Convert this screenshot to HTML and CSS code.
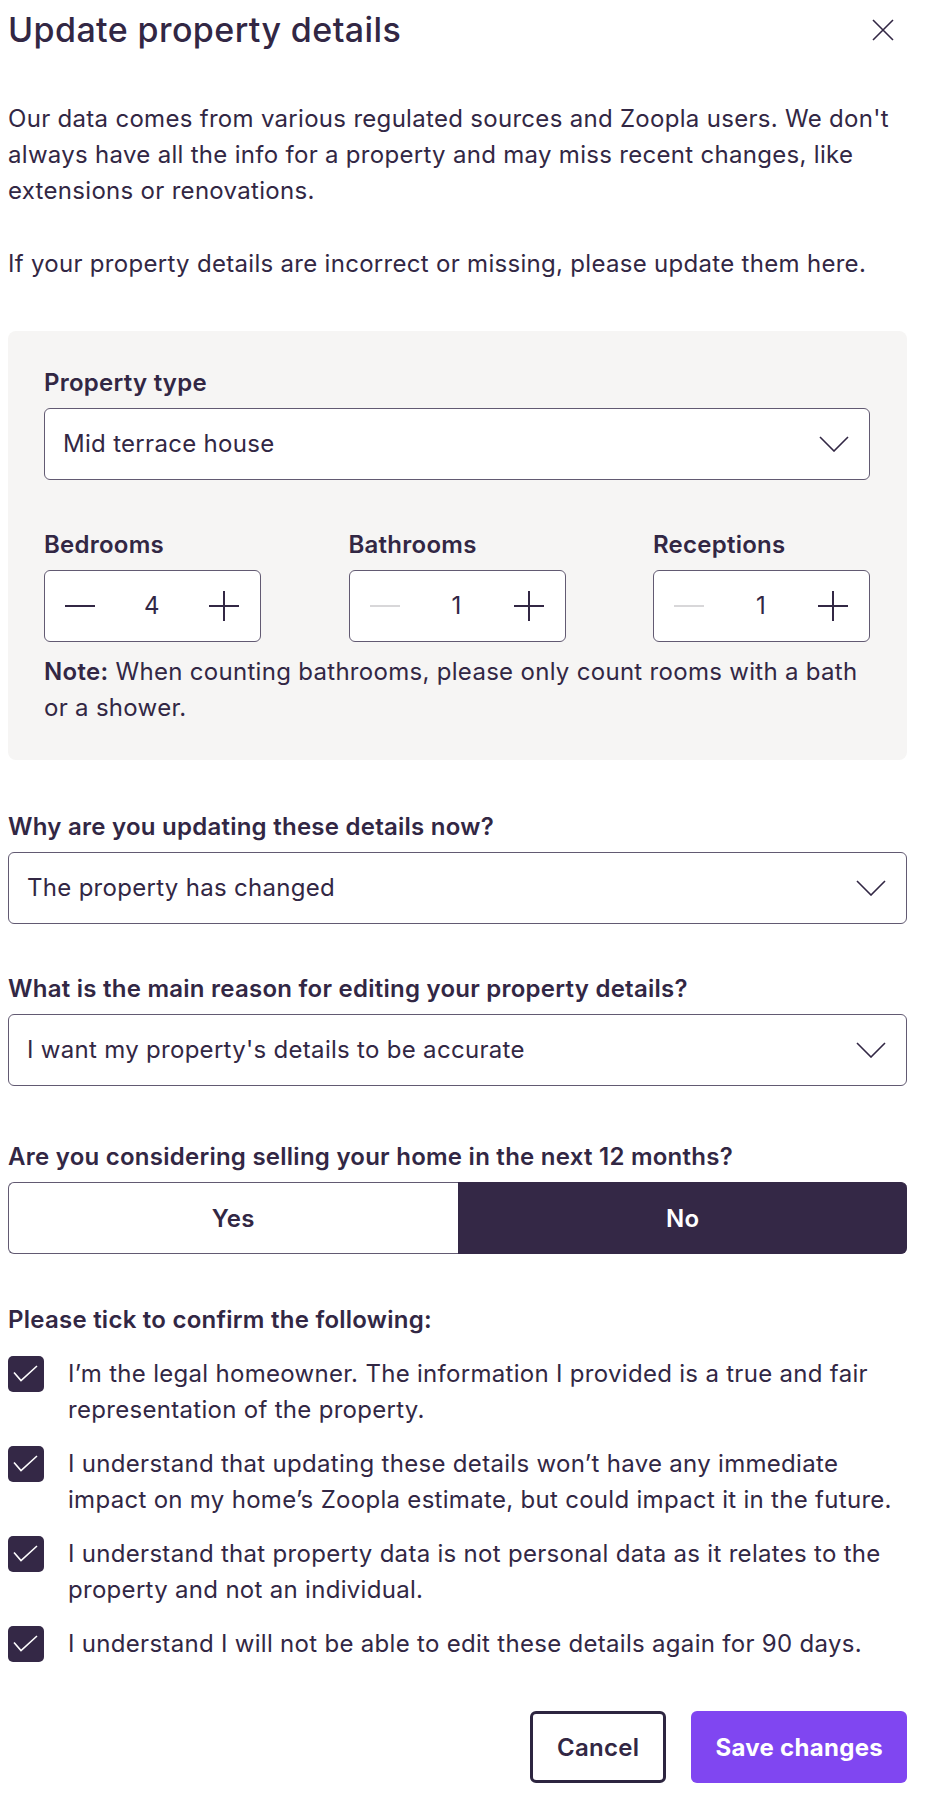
FILE: index.html
```html
<!DOCTYPE html>
<html lang="en">
<head>
<meta charset="utf-8">
<title>Update property details</title>
<link rel="stylesheet" href="styles.css">
</head>
<body>
<div class="dialog">
  <header class="header">
    <h1 class="title">Update property details</h1>
    <button class="close" aria-label="Close">
      <svg width="22" height="22" viewBox="0 0 22 22"><path d="M1 1L21 21M21 1L1 21" stroke="currentColor" stroke-width="1.6" fill="none"/></svg>
    </button>
  </header>

  <p class="intro">Our data comes from various regulated sources and Zoopla users. We don't always have all the info for a property and may miss recent changes, like extensions or renovations.</p>
  <p class="intro intro-second">If your property details are incorrect or missing, please update them here.</p>

  <section class="panel">
    <div class="field">
      <div class="label">Property type</div>
      <div class="select">
        <span>Mid terrace house</span>
        <svg class="chevron" width="30" height="16" viewBox="0 0 30 16"><path d="M1 1L15 15L29 1" stroke="currentColor" stroke-width="1.6" fill="none"/></svg>
      </div>
    </div>

    <div class="counters">
      <div class="field">
        <div class="label">Bedrooms</div>
        <div class="stepper">
          <svg class="step" width="30" height="30" viewBox="0 0 30 30"><path d="M0 15H30" stroke="currentColor" stroke-width="2"/></svg>
          <span class="value">4</span>
          <svg class="step" width="30" height="30" viewBox="0 0 30 30"><path d="M0 15H30M15 0V30" stroke="currentColor" stroke-width="2"/></svg>
        </div>
      </div>
      <div class="field">
        <div class="label">Bathrooms</div>
        <div class="stepper">
          <svg class="step step-disabled" width="30" height="30" viewBox="0 0 30 30"><path d="M0 15H30" stroke="currentColor" stroke-width="2"/></svg>
          <span class="value">1</span>
          <svg class="step" width="30" height="30" viewBox="0 0 30 30"><path d="M0 15H30M15 0V30" stroke="currentColor" stroke-width="2"/></svg>
        </div>
      </div>
      <div class="field">
        <div class="label">Receptions</div>
        <div class="stepper">
          <svg class="step step-disabled" width="30" height="30" viewBox="0 0 30 30"><path d="M0 15H30" stroke="currentColor" stroke-width="2"/></svg>
          <span class="value">1</span>
          <svg class="step" width="30" height="30" viewBox="0 0 30 30"><path d="M0 15H30M15 0V30" stroke="currentColor" stroke-width="2"/></svg>
        </div>
      </div>
    </div>

    <p class="note"><strong>Note:</strong> When counting bathrooms, please only count rooms with a bath or a shower.</p>
  </section>

  <div class="field field-why">
    <div class="label">Why are you updating these details now?</div>
    <div class="select">
      <span>The property has changed</span>
      <svg class="chevron" width="30" height="16" viewBox="0 0 30 16"><path d="M1 1L15 15L29 1" stroke="currentColor" stroke-width="1.6" fill="none"/></svg>
    </div>
  </div>

  <div class="field field-what">
    <div class="label">What is the main reason for editing your property details?</div>
    <div class="select">
      <span>I want my property's details to be accurate</span>
      <svg class="chevron" width="30" height="16" viewBox="0 0 30 16"><path d="M1 1L15 15L29 1" stroke="currentColor" stroke-width="1.6" fill="none"/></svg>
    </div>
  </div>

  <div class="field field-selling">
    <div class="label">Are you considering selling your home in the next 12 months?</div>
    <div class="toggle">
      <button class="option">Yes</button>
      <button class="option option-active">No</button>
    </div>
  </div>

  <div class="confirm">
    <div class="label">Please tick to confirm the following:</div>
    <ul class="checks">
      <li class="check">
        <span class="box"><svg width="36" height="36" viewBox="0 0 36 36"><path d="M6 16.5L13 24.5L29 10" stroke="#fff" stroke-width="1.6" fill="none"/></svg></span>
        <span class="check-text">I’m the legal homeowner. The information I provided is a true and fair representation of the property.</span>
      </li>
      <li class="check">
        <span class="box"><svg width="36" height="36" viewBox="0 0 36 36"><path d="M6 16.5L13 24.5L29 10" stroke="#fff" stroke-width="1.6" fill="none"/></svg></span>
        <span class="check-text">I understand that updating these details won’t have any immediate impact on my home’s Zoopla estimate, but could impact it in the future.</span>
      </li>
      <li class="check">
        <span class="box"><svg width="36" height="36" viewBox="0 0 36 36"><path d="M6 16.5L13 24.5L29 10" stroke="#fff" stroke-width="1.6" fill="none"/></svg></span>
        <span class="check-text">I understand that property data is not personal data as it relates to the property and not an individual.</span>
      </li>
      <li class="check">
        <span class="box"><svg width="36" height="36" viewBox="0 0 36 36"><path d="M6 16.5L13 24.5L29 10" stroke="#fff" stroke-width="1.6" fill="none"/></svg></span>
        <span class="check-text">I understand I will not be able to edit these details again for 90 days.</span>
      </li>
    </ul>
  </div>

  <div class="actions">
    <button class="btn btn-secondary">Cancel</button>
    <button class="btn btn-primary">Save changes</button>
  </div>
</div>
</body>
</html>
```

FILE: styles.css
```css
* { box-sizing: border-box; }

html, body {
  margin: 0;
  padding: 0;
  background: #ffffff;
}

body {
  font-family: Inter, "Noto Sans", "Liberation Sans", sans-serif;
  color: #322744;
  font-size: 24px;
  letter-spacing: 0.3px;
  line-height: 36px;
}

.dialog {
  width: 899px;
  margin-left: 8px;
  padding-bottom: 18px;
}

.header {
  height: 60px;
  display: flex;
  align-items: center;
  justify-content: space-between;
}

.title {
  margin: 0;
  font-size: 34px;
  font-weight: 500;
  line-height: 60px;
  letter-spacing: 0.4px;
}

.close {
  width: 22px;
  height: 22px;
  padding: 0;
  margin-right: 13px;
  border: 0;
  background: none;
  color: #322744;
  display: flex;
}

.intro {
  margin: 41px 0 0;
}

.intro-second {
  margin-top: 37px;
}

.panel {
  margin-top: 49px;
  background: #f6f5f4;
  border-radius: 8px;
  padding: 37px 37px 34px 36px;
}

.field {
  display: flex;
  flex-direction: column;
  gap: 10px;
}

.label {
  font-size: 24px;
  font-weight: 600;
  line-height: 30px;
  letter-spacing: 0.25px;
}

.select {
  height: 72px;
  border: 1px solid #625a72;
  border-radius: 6px;
  background: #ffffff;
  display: flex;
  align-items: center;
  justify-content: space-between;
  padding: 0 20px 0 18px;
}

.chevron {
  color: #322744;
  flex: none;
}

.counters {
  margin-top: 50px;
  display: grid;
  grid-template-columns: repeat(3, 217px);
  justify-content: space-between;
}

.stepper {
  height: 72px;
  border: 1px solid #625a72;
  border-radius: 6px;
  background: #ffffff;
  display: flex;
  align-items: center;
  justify-content: space-between;
  padding: 0 21px 0 20px;
}

.step {
  color: #322744;
  flex: none;
}

.step-disabled {
  color: #d8d7d9;
}

.value {
  font-size: 24px;
}

.note {
  margin: 12px 0 0;
}

.note strong {
  font-weight: 600;
}

.field-why {
  margin-top: 52px;
}

.field-what {
  margin-top: 50px;
}

.field-selling {
  margin-top: 56px;
}

.toggle {
  display: grid;
  grid-template-columns: 1fr 1fr;
  height: 72px;
}

.option {
  font-family: inherit;
  font-size: 24px;
  font-weight: 600;
  letter-spacing: 0.3px;
  color: #322744;
  background: #ffffff;
  border: 1px solid #625a72;
  border-right: 0;
  border-radius: 6px 0 0 6px;
  padding: 0;
}

.option-active {
  background: #342846;
  border-color: #342846;
  color: #ffffff;
  border-radius: 0 6px 6px 0;
}

.confirm {
  margin-top: 51px;
}

.checks {
  list-style: none;
  margin: 21px 0 0;
  padding: 0;
  display: flex;
  flex-direction: column;
  gap: 18px;
}

.check {
  display: flex;
  align-items: flex-start;
  gap: 24px;
}

.box {
  flex: none;
  width: 36px;
  height: 36px;
  border-radius: 5px;
  background: #342846;
  display: flex;
}

.check-text {
  flex: 1;
}

.actions {
  margin-top: 49px;
  display: flex;
  justify-content: flex-end;
  gap: 25px;
}

.btn {
  height: 72px;
  font-family: inherit;
  font-size: 24px;
  font-weight: 700;
  letter-spacing: 0.3px;
  border-radius: 6px;
  padding: 0 24px;
}

.btn-secondary {
  background: #ffffff;
  color: #322744;
  border: 3px solid #2d2540;
  font-weight: 600;
}

.btn-primary {
  background: #8046f1;
  color: #ffffff;
  border: 0;
}
```
